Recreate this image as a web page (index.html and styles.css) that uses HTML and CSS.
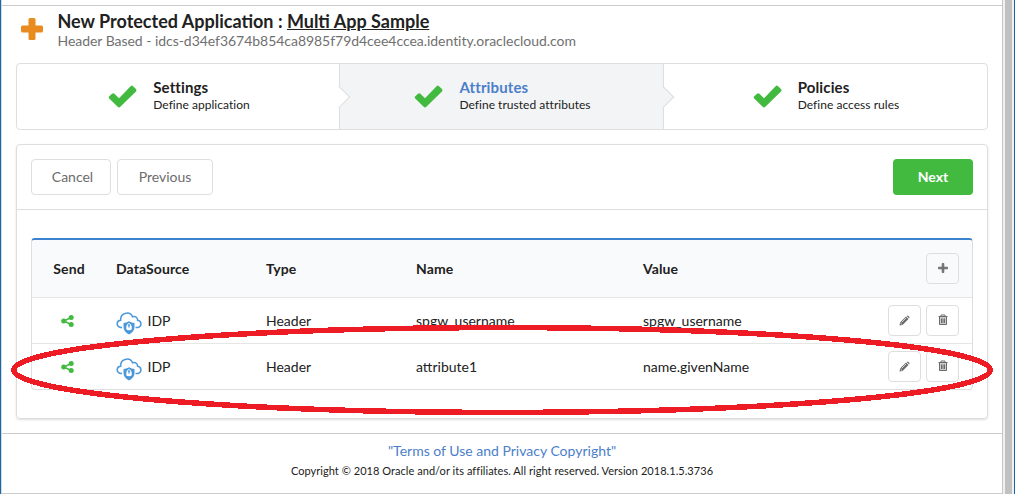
FILE: index.html
```html
<!DOCTYPE html>
<html lang="en">
<head>
<meta charset="utf-8">
<title>New Protected Application</title>
<link rel="stylesheet" href="styles.css">
</head>
<body>
<svg class="defs" width="0" height="0" aria-hidden="true">
  <symbol id="check" viewBox="0 0 29 24"><path d="M1.3 12.200 4 9.800Q5.200 8.800 6.400 9.800L11 14.300 22.600 2.200Q23.800 1 25 2.200L28 5Q29 6.200 28 7.400L12.300 22.800Q11 24 9.700 22.800L1.200 14.500Q0 13.300 1.300 12.200Z"/></symbol>
  <symbol id="share" viewBox="0 0 13 12"><path d="M3 6 10 2.500M3 6 10 9.500" fill="none" stroke="currentColor" stroke-width="1.500"/><circle cx="2.700" cy="6" r="2.500"/><circle cx="10.200" cy="2.500" r="2.500"/><circle cx="10.200" cy="9.500" r="2.500"/></symbol>
  <symbol id="cloud" viewBox="0 0 26 23"><path d="M6 15.500H4.500C-.2 14 .3 8.500 4.700 8.300 4.500 5.500 5.500 2.500 9 1.500 13 .2 15.500 2.500 16.500 4.800 19.800 3.700 21.700 6 21.600 8.300 25.800 9 26 14 22.200 15.400L19.500 15.600" fill="none" stroke="currentColor" stroke-width="1.500"/><path d="M13 9.200Q15.500 11 18.500 11V15Q18.500 19.800 13 22.500 7.500 19.800 7.500 15V11Q10.500 11 13 9.200Z"/><path d="M10.300 13.700H15.700V17.200Q15.300 18.300 13 18.300 10.700 18.300 10.300 17.200Z" fill="#fff"/><path d="M11.400 14V12.500Q13 10.500 14.600 12.500V14" fill="none" stroke="#fff"/><path d="M13 13.500V15.500" stroke="currentColor" stroke-width="1.300"/></symbol>
  <symbol id="pencil" viewBox="0 0 11 11"><path d="M.5 10.500 1 7.500 7 1.500 9.500 4 3.500 10ZM7.600.9Q8.500 0 9.400.9L10.100 1.600Q11 2.500 10.100 3.400Z"/><path d="M2.700 7.300 7.100 2.900M1.400 8 3 9.600" stroke="#fff" stroke-width=".7"/></symbol>
  <symbol id="trash" viewBox="0 0 10 12"><path d="M1.500 3H8.500V11H1.500Z" opacity=".35"/><path d="M.5 2.500H9.500M3 2.500V1H7V2.500M1.500 3V10.500H8.500V3M3.500 4.500V9M5 4.500V9M6.500 4.500V9" fill="none" stroke="currentColor" stroke-width="1"/></symbol>
  <symbol id="add" viewBox="0 0 10 10"><path d="M4.200.5H5.800V4.200H9.500V5.800H5.800V9.500H4.200V5.800H.5V4.200H4.200Z" stroke="currentColor" stroke-width=".9" stroke-linejoin="round"/></symbol>
</svg>
<div class="window">
  <main class="page">
    <header class="heading">
      <svg class="heading-icon" viewBox="0 0 22 22"><path d="M9 0H13Q14.500 0 14.500 1.500V7.500H20.500Q22 7.500 22 9V13Q22 14.500 20.500 14.500H14.500V20.500Q14.500 22 13 22H9Q7.500 22 7.500 20.500V14.500H1.500Q0 14.500 0 13V9Q0 7.500 1.500 7.500H7.500V1.500Q7.500 0 9 0Z"/></svg>
      <div>
        <h1>New Protected Application : <u>Multi App Sample</u></h1>
        <p class="subtitle">Header Based - idcs-d34ef3674b854ca8985f79d4cee4ccea.identity.oraclecloud.com</p>
      </div>
    </header>
    <nav class="steps">
      <div class="step"><svg class="check"><use href="#check"/></svg><div><div class="step-title">Settings</div><div class="step-text">Define application</div></div></div>
      <div class="step active"><svg class="check"><use href="#check"/></svg><div><div class="step-title">Attributes</div><div class="step-text">Define trusted attributes</div></div></div>
      <div class="step"><svg class="check"><use href="#check"/></svg><div><div class="step-title">Policies</div><div class="step-text">Define access rules</div></div></div>
    </nav>
    <section class="panel">
      <div class="toolbar">
        <button class="btn cancel">Cancel</button>
        <button class="btn previous">Previous</button>
        <button class="btn next">Next</button>
      </div>
      <table class="attributes">
        <colgroup><col class="c-send"><col class="c-source"><col class="c-type"><col class="c-name"><col class="c-value"><col></colgroup>
        <thead><tr><th class="send">Send</th><th>DataSource</th><th>Type</th><th>Name</th><th>Value</th><th><div class="actions"><button class="icon-btn"><svg class="add"><use href="#add"/></svg></button></div></th></tr></thead>
        <tbody>
          <tr><td class="send"><svg class="share"><use href="#share"/></svg></td><td><div class="source"><svg class="cloud"><use href="#cloud"/></svg>IDP</div></td><td>Header</td><td>spgw_username</td><td>spgw_username</td><td><div class="actions"><button class="icon-btn"><svg class="pencil"><use href="#pencil"/></svg></button><button class="icon-btn"><svg class="trash"><use href="#trash"/></svg></button></div></td></tr>
          <tr><td class="send"><svg class="share"><use href="#share"/></svg></td><td><div class="source"><svg class="cloud"><use href="#cloud"/></svg>IDP</div></td><td>Header</td><td>attribute1</td><td>name.givenName</td><td><div class="actions"><button class="icon-btn"><svg class="pencil"><use href="#pencil"/></svg></button><button class="icon-btn"><svg class="trash"><use href="#trash"/></svg></button></div></td></tr>
        </tbody>
      </table>
    </section>
    <footer class="footer">
      <div class="terms">"<a>Terms of Use and Privacy Copyright</a>"</div>
      <div class="copyright">Copyright © 2018 Oracle and/or its affiliates. All right reserved. Version 2018.1.5.3736</div>
    </footer>
  </main>
  <div class="scrollbar"><div class="thumb"></div></div>
</div>
<svg class="highlight" viewBox="0 0 1015 494"><ellipse cx="502" cy="370" rx="488.300" ry="42.400"/></svg>
</body>
</html>
```

FILE: styles.css
```css
* { box-sizing: border-box; }
body { margin: 0; height: 494px; overflow: hidden; background: #fff; color: #212121; font: 14px/18px Lato, sans-serif; }
h1, p { margin: 0; }
svg { fill: currentColor; display: block; flex: none; }
.defs { position: absolute; }
.window { display: flex; height: 494px; border-left: 1px solid #1867a8; border-right: 1px solid #1867a8; }
.page { width: 1002px; height: 494px; padding-top: 5px; border-left: 1px solid #d4d9de; border-right: 1px solid #c8c8c8; border-bottom: 1px solid #ccc; }
.scrollbar { flex: 1; padding: 0 2px; background: #f0f0f0; }
.thumb { height: 100%; background: #c1c1c1; }

.heading { display: flex; height: 58px; border-top: 1px solid #ccc; padding: 5px 0 0 18.500px; gap: 15px; }
.heading-icon { width: 22px; height: 22px; margin-top: 6.500px; color: #e98b1e; }
h1 { font-size: 18px; line-height: 20px; font-weight: 700; white-space: nowrap; }
.subtitle { color: #707070; font-size: 14px; line-height: 20px; letter-spacing: -.04px; white-space: nowrap; }

.steps { display: grid; grid-template-columns: 323px 324px 1fr; width: 972px; height: 67px; margin-left: 14px; border: 1px solid #dededf; border-radius: 4px; }
.step { position: relative; display: flex; align-items: center; justify-content: center; gap: 16px; padding: 0 0 0 2px; border-right: 1px solid #dededf; }
.step:last-child { border-right: 0; padding-left: 1px; }
.step:not(:last-child)::after { content: ""; position: absolute; right: -8px; top: 25px; width: 15px; height: 15px; background: #fff; border: solid #dededf; border-width: 0 1px 1px 0; transform: rotate(-45deg); z-index: 1; }
.step.active { background: #f3f4f5; }
.step.active::after { background: #f3f4f5; }
.active .step-title { color: #4c7fc9; }
.check { width: 29px; height: 24px; margin-bottom: 1px; color: #42ba40; }
.step-title { font-size: 15px; font-weight: 700; line-height: 17px; letter-spacing: .12px; }
.step-text { font-size: 12px; line-height: 18px; letter-spacing: .03px; }

.panel { width: 972px; height: 275px; margin: 14px 0 0 14px; border: 1px solid #dededf; border-radius: 4px; box-shadow: 0 1px 2px rgba(34,36,38,.15); }
.toolbar { display: flex; gap: 6px; height: 65px; padding: 14px; border-bottom: 1px solid #dededf; }
.btn { height: 36px; padding: 0 0 2px; border: 1px solid #dededf; border-radius: 4px; background: #fff; color: #6c6c6c; font: 14px Lato, sans-serif; }
.cancel { width: 80px; padding-left: 3px; }
.previous { width: 96px; }
.next { width: 80px; margin-left: auto; background: #42ba40; border: 0; color: #fff; font-weight: 700; }

.attributes { width: 942px; margin: 28px 0 0 14px; border: 1px solid #dededf; border-top: 2px solid #3b83cf; border-radius: 4px; border-spacing: 0; table-layout: fixed; overflow: hidden; }
.c-send { width: 73px; }
.c-source, .c-type { width: 150px; }
.c-name { width: 227px; }
.c-value { width: 200px; }
th, td { height: 46px; padding: 0 0 0 11px; text-align: left; border-top: 1px solid #e6e6e7; }
th { height: 57px; background: #f9fafb; border-top: 0; font-weight: 700; letter-spacing: .1px; }
th.send, td.send { padding: 0 0 0 1px; text-align: center; }
.share { width: 13px; height: 12px; margin: 0 0 0 28px; color: #42ba40; }
.source { display: flex; align-items: center; gap: 6px; margin-left: -.5px; }
.cloud { width: 26px; height: 23px; margin-top: 5px; color: #4a98d9; }
.actions { display: flex; justify-content: flex-end; gap: 5px; padding-right: 13px; }
.icon-btn { width: 33px; height: 31px; padding: 0 0 1px; display: flex; align-items: center; justify-content: center; border: 1px solid #dededf; border-radius: 4px; background: transparent; color: #6c6c6c; }
.add { width: 10px; height: 10px; }
.pencil { width: 11px; height: 11px; }
.trash { width: 10px; height: 12px; }

.footer { margin-top: 14px; border-top: 1px solid #ccc; padding-top: 8px; text-align: center; }
.terms { font-size: 14px; line-height: 18px; color: #4c7fc9; }
.copyright { margin-top: 2px; font-size: 11px; line-height: 18px; letter-spacing: .045px; }
.highlight { position: absolute; left: 0; top: 0; width: 1015px; height: 494px; z-index: 2; pointer-events: none; }
.highlight ellipse { fill: none; stroke: #ed1c24; stroke-width: 5.5; shape-rendering: crispEdges; }
```
